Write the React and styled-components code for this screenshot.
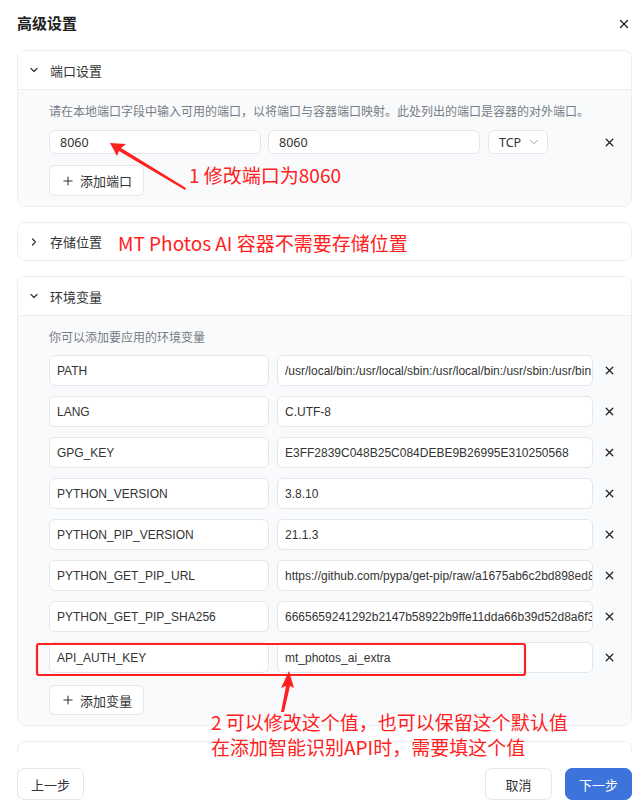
import React from "react"
import styled, { createGlobalStyle } from "styled-components"
import { ChevronDown, ChevronRight, X, Plus } from "lucide-react"

const ports = [{ host: "8060", container: "8060", proto: "TCP" }]

const envs = [
  ["PATH", "/usr/local/bin:/usr/local/sbin:/usr/local/bin:/usr/sbin:/usr/bin:/sbin:/bin"],
  ["LANG", "C.UTF-8"],
  ["GPG_KEY", "E3FF2839C048B25C084DEBE9B26995E310250568"],
  ["PYTHON_VERSION", "3.8.10"],
  ["PYTHON_PIP_VERSION", "21.1.3"],
  ["PYTHON_GET_PIP_URL", "https://github.com/pypa/get-pip/raw/a1675ab6c2bd898ed82b1f58c486097f763c74a9/public/get-pip.py"],
  ["PYTHON_GET_PIP_SHA256", "6665659241292b2147b58922b9ffe11dda66b39d52d8a6f3aa310bc1d60ea6f7"],
  ["API_AUTH_KEY", "mt_photos_ai_extra"],
]

const App = () => {
  return (
    <Page>
      <GlobalStyle />
      <TopBar>
        <Title>高级设置</Title>
        <CloseBtn>
          <X size={14} strokeWidth={2.2} />
        </CloseBtn>
      </TopBar>

      <Body>
        <Card>
          <CardHeader open>
            <ChevronDown size={12} strokeWidth={2.4} />
            <span>端口设置</span>
          </CardHeader>
          <CardBody>
            <Hint>请在本地端口字段中输入可用的端口，以将端口与容器端口映射。此处列出的端口是容器的对外端口。</Hint>
            {ports.map((p, i) => (
              <Row key={i}>
                <Field width={212} small>{p.host}</Field>
                <Field width={212} small>{p.container}</Field>
                <Select>
                  <span>{p.proto}</span>
                  <ChevronDown size={14} strokeWidth={1.6} color="#9aa0a8" />
                </Select>
                <RemoveBtn>
                  <X size={13} strokeWidth={2.4} />
                </RemoveBtn>
              </Row>
            ))}
            <AddButton>
              <Plus size={14} strokeWidth={1.8} />
              添加端口
            </AddButton>
          </CardBody>
        </Card>

        <Card>
          <CardHeader>
            <ChevronRight size={12} strokeWidth={2.4} />
            <span>存储位置</span>
          </CardHeader>
        </Card>

        <Card>
          <CardHeader open>
            <ChevronDown size={12} strokeWidth={2.4} />
            <span>环境变量</span>
          </CardHeader>
          <CardBody>
            <Hint>你可以添加要应用的环境变量</Hint>
            <EnvList>
              {envs.map(([k, v]) => (
                <Row key={k}>
                  <Field width={220}>{k}</Field>
                  <Field width={316}>{v}</Field>
                  <RemoveBtn>
                    <X size={13} strokeWidth={2.4} />
                  </RemoveBtn>
                </Row>
              ))}
            </EnvList>
            <AddButton tall>
              <Plus size={14} strokeWidth={1.8} />
              添加变量
            </AddButton>
          </CardBody>
        </Card>

        <Card>
          <CardHeader>
            <ChevronRight size={12} strokeWidth={2.4} />
            <span>网络</span>
          </CardHeader>
        </Card>
      </Body>

      <Footer>
        <Button>上一步</Button>
        <FooterRight>
          <Button>取消</Button>
          <Button primary>下一步</Button>
        </FooterRight>
      </Footer>

      <Overlay width="644" height="812">
        <polygon points="110,143 126,144 121,148 186,188 185,190 119,151 117,156" fill="#ff2020" />
        <polygon points="289,671 294,688 290,686 284,712 281,712 286,686 281,688" fill="#ff2020" />
        <rect x="37" y="644" width="488" height="31" rx="2" fill="none" stroke="#ff2020" strokeWidth="2.2" />
      </Overlay>
      <Note style={{ left: 189, top: 162 }} size={19}>1 修改端口为8060</Note>
      <Note style={{ left: 118, top: 230 }} size={19}>MT Photos AI 容器不需要存储位置</Note>
      <Note style={{ left: 211, top: 709 }} size={19}>
        2 可以修改这个值，也可以保留这个默认值
        <br />
        在添加智能识别API时，需要填这个值
      </Note>
    </Page>
  )
}

const GlobalStyle = createGlobalStyle`
  body {
    margin: 0;
    background: #ffffff;
    font-family: "Noto Sans CJK SC", "Noto Sans", sans-serif;
    color: #333;
  }
`

const Page = styled.div`
  position: relative;
  width: 644px;
  height: 812px;
  display: flex;
  flex-direction: column;
  background: #fff;
  overflow: hidden;
`

const TopBar = styled.div`
  height: 44px;
  flex-shrink: 0;
  display: flex;
  align-items: center;
  justify-content: space-between;
  padding: 0 13px 0 17px;
`

const Title = styled.div`
  font-size: 15px;
  font-weight: 700;
  color: #222;
`

const CloseBtn = styled.div`
  display: flex;
  align-items: center;
  color: #222;
  margin-top: 3px;
`

const Body = styled.div`
  flex: 1;
  overflow: hidden;
  padding: 6px 12px 0 17px;
  display: flex;
  flex-direction: column;
  gap: 15px;
`

const Card = styled.div`
  flex-shrink: 0;
  border: 1px solid #eceef1;
  border-radius: 8px;
  overflow: hidden;
  background: #fff;
`

const CardHeader = styled.div`
  height: ${props => (props.open ? "38px" : "37px")};
  display: flex;
  align-items: center;
  gap: 10px;
  padding-left: 10px;
  font-size: 13px;
  color: #333;
  background: #fff;
  border-bottom: ${props => (props.open ? "1px solid #eceef1" : "none")};
  svg {
    color: #333;
  }
`

const CardBody = styled.div`
  background: #f9fafb;
  padding: 12px 14px 10px 31px;
  display: flex;
  flex-direction: column;
  align-items: flex-start;
`

const Hint = styled.div`
  font-size: 12px;
  line-height: 18px;
  color: #777c85;
  margin-bottom: 10px;
`

const EnvList = styled.div`
  display: flex;
  flex-direction: column;
  gap: 10px;
  width: 100%;
  margin-top: -1px;
`

const Row = styled.div`
  display: flex;
  align-items: center;
  gap: 8px;
  width: 100%;
`

const Field = styled.div`
  box-sizing: border-box;
  width: ${props => props.width}px;
  height: ${props => (props.small ? "24px" : "31px")};
  flex-shrink: 0;
  display: flex;
  align-items: center;
  padding: 0 ${props => (props.small ? "10px" : "7px")};
  margin-right: ${props => (props.small ? "-1px" : "0")};
  background: #fff;
  border: 1px solid #e3e6ea;
  border-radius: 6px;
  font-family: ${props => (props.small ? '"Noto Sans", sans-serif' : '"Liberation Sans", Arial, sans-serif')};
  font-size: ${props => (props.small ? "12.5px" : "12px")};
  color: #333;
  white-space: nowrap;
  overflow: hidden;
  text-overflow: clip;
`

const Select = styled.div`
  box-sizing: border-box;
  width: 60px;
  height: 24px;
  display: flex;
  align-items: center;
  justify-content: space-between;
  padding: 0 6px 0 10px;
  margin-left: 1px;
  background: #fff;
  border: 1px solid #e3e6ea;
  border-radius: 6px;
  font-family: "Noto Sans", sans-serif;
  font-size: 12.5px;
  color: #333;
`

const RemoveBtn = styled.div`
  margin-left: auto;
  width: 16px;
  display: flex;
  justify-content: center;
  color: #222;
`

const AddButton = styled.div`
  box-sizing: border-box;
  height: ${props => (props.tall ? "30px" : "31px")};
  margin-top: ${props => (props.tall ? "12px" : "11px")};
  padding: 0 8px;
  width: 95px;
  display: flex;
  align-items: center;
  justify-content: center;
  gap: 5px;
  background: #fff;
  border: 1px solid #e3e6ea;
  border-radius: 6px;
  font-size: 13px;
  color: #333;
  white-space: nowrap;
  svg {
    flex-shrink: 0;
  }
`

const Footer = styled.div`
  height: 60px;
  flex-shrink: 0;
  display: flex;
  align-items: flex-start;
  justify-content: space-between;
  padding: 16px 12px 0 17px;
  box-sizing: border-box;
`

const FooterRight = styled.div`
  display: flex;
  gap: 13px;
`

const Button = styled.div`
  box-sizing: border-box;
  width: 67px;
  height: 32px;
  display: flex;
  align-items: center;
  justify-content: center;
  border-radius: 7px;
  font-size: 13px;
  background: ${props => (props.primary ? "#3d74db" : "#fff")};
  color: ${props => (props.primary ? "#fff" : "#333")};
  border: 1px solid ${props => (props.primary ? "#3d74db" : "#e3e6ea")};
`

const Overlay = styled.svg`
  position: absolute;
  left: 0;
  top: 0;
  pointer-events: none;
`

const Note = styled.div`
  position: absolute;
  color: #ff2020;
  font-size: ${props => props.size}px;
  line-height: 25px;
  white-space: nowrap;
  font-family: "Noto Sans CJK SC", "Noto Sans", sans-serif;
`

export default App
